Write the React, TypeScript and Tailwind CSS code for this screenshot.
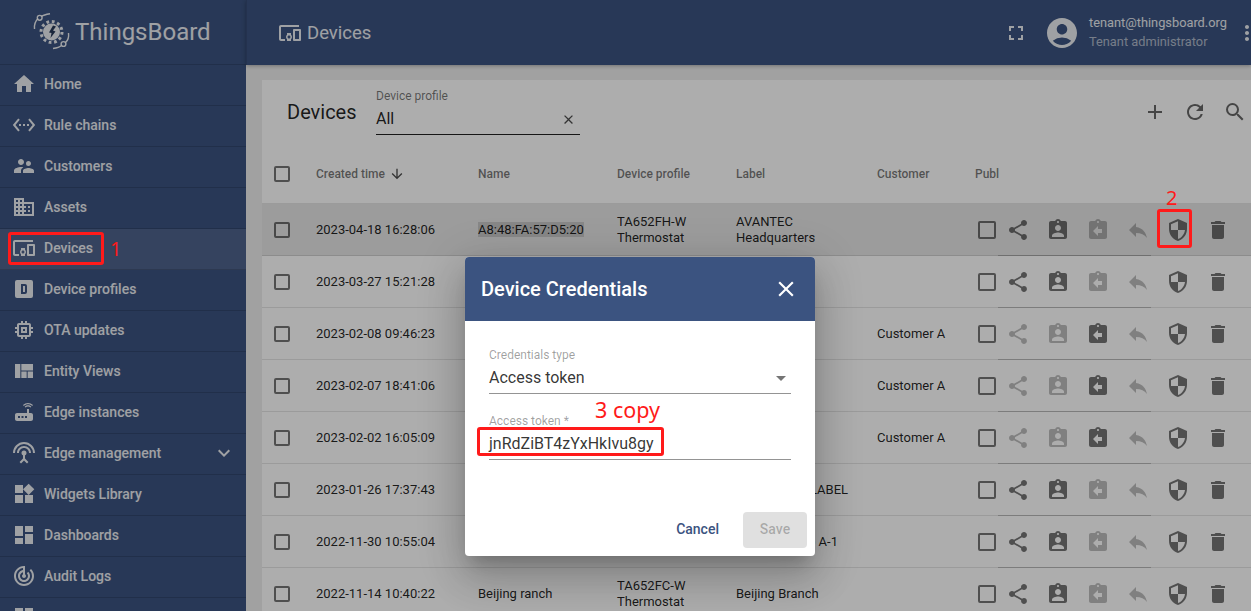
import React from "react";
import {
  MdHome, MdSettingsEthernet, MdSupervisorAccount, MdDomain, MdDevicesOther, MdMemory, MdViewQuilt, MdRouter,
  MdSettingsInputAntenna, MdWidgets, MdDashboard, MdTrackChanges, MdExpandMore, MdAdd, MdRefresh, MdSearch,
  MdFullscreen, MdAccountCircle, MdMoreVert, MdShare, MdAssignmentInd, MdAssignmentReturn, MdReply, MdSecurity,
  MdDelete, MdClose, MdArrowDownward, MdArrowDropDown,
} from "react-icons/md";

function ProfileIcon({ size = 24 }: { size?: number }) {
  return (
    <svg width={size} height={size} viewBox="0 0 24 24" fill="currentColor">
      <path d="M9,7V17H13A2,2 0 0,0 15,15V9A2,2 0 0,0 13,7H9M5,3H19A2,2 0 0,1 21,5V19A2,2 0 0,1 19,21H5A2,2 0 0,1 3,19V5A2,2 0 0,1 5,3M11,9H13V15H11V9Z" />
    </svg>
  );
}

function Logo() {
  return (
    <svg width="38" height="38" viewBox="0 0 38 38" fill="none">
      <circle cx="18.500" cy="19" r="8.500" fill="currentColor" />
      <circle cx="18.500" cy="19" r="10.500" stroke="currentColor" strokeWidth="3" strokeDasharray="2.750 2.750" />
      <path d="M20 12.500l3 1-3 4 2.500 1-5 6.500 1-5-2.500-.5z" fill="#273858" />
      <path d="M1.500 16C1 11.500 2.500 8 5 5.500" stroke="currentColor" strokeWidth="1.400" />
      <path d="M8.500 3.500C10.500 2 13 1.500 17 .8" stroke="currentColor" strokeWidth="1.400" />
      <circle cx="6.700" cy="4.800" r="2.400" stroke="currentColor" strokeWidth="1.400" />
      <path d="M35.500 20c.5 4-.5 7.500-3 9.500" stroke="currentColor" strokeWidth="1.400" />
      <path d="M28.500 32.500c-2 1.800-5 2.500-8.500 3" stroke="currentColor" strokeWidth="1.400" />
      <circle cx="30.500" cy="31" r="2.400" stroke="currentColor" strokeWidth="1.400" />
    </svg>
  );
}

const nav: { label: string; icon: React.ReactNode; active?: boolean; more?: boolean }[] = [
  { label: "Home", icon: <MdHome size={24} /> },
  { label: "Rule chains", icon: <MdSettingsEthernet size={24} /> },
  { label: "Customers", icon: <MdSupervisorAccount size={24} /> },
  { label: "Assets", icon: <MdDomain size={24} /> },
  { label: "Devices", icon: <MdDevicesOther size={24} />, active: true },
  { label: "Device profiles", icon: <ProfileIcon /> },
  { label: "OTA updates", icon: <MdMemory size={24} /> },
  { label: "Entity Views", icon: <MdViewQuilt size={24} /> },
  { label: "Edge instances", icon: <MdRouter size={24} /> },
  { label: "Edge management", icon: <MdSettingsInputAntenna size={24} />, more: true },
  { label: "Widgets Library", icon: <MdWidgets size={24} /> },
  { label: "Dashboards", icon: <MdDashboard size={24} /> },
  { label: "Audit Logs", icon: <MdTrackChanges size={24} /> },
  { label: "Api Usage", icon: <MdDashboard size={24} /> },
];

type Row = { time: string; name?: string; profile?: string[]; label?: string[]; customer?: string; assigned?: boolean; hover?: boolean };

const rows: Row[] = [
  { time: "2023-04-18 16:28:06", name: "A8:48:FA:57:D5:20", profile: ["TA652FH-W", "Thermostat"], label: ["AVANTEC", "Headquarters"], hover: true },
  { time: "2023-03-27 15:21:28" },
  { time: "2023-02-08 09:46:23", customer: "Customer A", assigned: true },
  { time: "2023-02-07 18:41:06", customer: "Customer A", assigned: true },
  { time: "2023-02-02 16:05:09", customer: "Customer A", assigned: true },
  { time: "2023-01-26 17:37:43", label: ["RED DEVICE LABEL"] },
  { time: "2022-11-30 10:55:04", label: ["Device_Group A-1"] },
  { time: "2022-11-14 10:40:22", name: "Beijing ranch", profile: ["TA652FC-W", "Thermostat"], label: ["Beijing Branch"] },
];

function Box({ className }: { className: string }) {
  return <div className={`border-2 border-black/54 rounded-[2px] ${className}`} />;
}

function Act({ on, children }: { on: boolean; children: React.ReactNode }) {
  return <div className={`w-10 flex justify-center ${on ? "text-black/54" : "text-black/26"}`}>{children}</div>;
}

export default function App() {
  return (
    <div className="relative w-[1251px] h-[611px] overflow-hidden flex font-[Roboto,sans-serif] bg-[#eeeeee]">
      <aside className="w-[246px] shrink-0 bg-[#3b5380] text-white/90 flex flex-col">
        <div className="h-[65px] shrink-0 border-b border-black/15 flex items-center pl-[33px] gap-[4px]">
          <Logo />
          <span className="text-[24px] text-white/90 leading-none">ThingsBoard</span>
        </div>
        {nav.map((n) => (
          <div key={n.label} className={`h-[41px] shrink-0 border-b border-black/15 flex items-center pl-3 pr-[3px] pb-[2px] gap-2 text-[14px] font-medium ${n.active ? "bg-white/10" : ""}`}>
            {n.icon}
            <span className="flex-1">{n.label}</span>
            {n.more && <MdExpandMore size={24} className="mr-[7px]" />}
          </div>
        ))}
      </aside>

      <div className="flex-1 min-w-0 flex flex-col">
        <header className="h-[65px] shrink-0 bg-[#3b5380] text-white/90 flex items-center pl-[31px] shadow-[0_1px_4px_rgba(0,0,0,.3)] border-l border-black/10">
          <MdDevicesOther size={24} />
          <span className="ml-[5px] text-[18.5px] pt-[2px]">Devices</span>
          <MdFullscreen size={24} className="ml-auto" />
          <MdAccountCircle size={36} className="ml-[16px]" />
          <div className="ml-[9px] w-[146px] leading-[18px]">
            <div className="text-[12.8px] -mt-[1px]">tenant@thingsboard.org</div>
            <div className="text-[12.8px] pt-[1px] text-white/60">Tenant administrator</div>
          </div>
          <MdMoreVert size={24} className="shrink-0 ml-[0px] -mr-[8px]" />
        </header>

        <main className="flex-1 min-h-0 pt-[15px] pl-4 overflow-hidden">
          <section className="bg-white h-[600px]">
            <div className="h-[64px] flex items-center pl-[25px]">
              <h1 className="text-[20px] text-black/87 w-[89px]">Devices</h1>
              <div className="w-[204px] border-b border-black/87 h-[46px]">
                <div className="text-[12px] text-black/54 leading-[14px]">Device profile</div>
                <div className="flex items-center justify-between h-[30px] pt-[2px] pr-[4px]">
                  <span className="text-[16px] text-black/87">All</span>
                  <MdClose size={15} className="text-black/70" />
                </div>
              </div>
              <div className="ml-auto flex text-black/60">
                <div className="w-10 flex justify-center"><MdAdd size={24} /></div>
                <div className="w-10 flex justify-center"><MdRefresh size={24} /></div>
                <div className="w-10 flex justify-center mr-[-4px]"><MdSearch size={24} /></div>
              </div>
            </div>

            <div className="h-[60px] flex items-center text-[12px] font-medium text-black/54 border-b border-black/10">
              <div className="w-[54px] pl-3 shrink-0"><Box className="w-4 h-4" /></div>
              <div className="w-[162px] shrink-0 flex items-center gap-[4px]">Created time <MdArrowDownward size={16} className="text-black/70" /></div>
              <div className="w-[139px] shrink-0">Name</div>
              <div className="w-[119px] shrink-0">Device profile</div>
              <div className="w-[141px] shrink-0">Label</div>
              <div className="w-[98px] shrink-0">Customer</div>
              <div>Publ</div>
            </div>

            {rows.map((r) => (
              <div key={r.time} className={`h-[52px] flex items-center text-[13px] leading-[16px] text-black/87 border-b border-black/10 ${r.hover ? "bg-[#e6e6e6]" : ""}`}>
                <div className="w-[54px] pl-3 shrink-0"><Box className="w-4 h-4" /></div>
                <div className="w-[162px] shrink-0">{r.time}</div>
                <div className="w-[139px] shrink-0">
                  {r.name && <span className={r.hover ? "bg-[#c8c8c8]" : ""}>{r.name}</span>}
                </div>
                <div className="w-[119px] shrink-0">{r.profile?.map((p) => <div key={p}>{p}</div>)}</div>
                <div className="w-[141px] shrink-0 whitespace-nowrap">{r.label?.map((p) => <div key={p}>{p}</div>)}</div>
                <div className="w-[98px] shrink-0">{r.customer}</div>
                <div className="w-[3px] shrink-0" />
                <Box className="w-[18px] h-[18px] shrink-0" />
                <div className="relative ml-[2px] flex h-full items-center">
                  <Act on={!r.assigned}><MdShare size={24} /></Act>
                  <Act on={!r.assigned}><MdAssignmentInd size={24} /></Act>
                  <Act on={!!r.assigned}><MdAssignmentReturn size={24} /></Act>
                  <Act on={false}><MdReply size={24} /></Act>
                  <Act on><MdSecurity size={24} /></Act>
                  <Act on><MdDelete size={24} /></Act>
                  <div className="absolute left-0 bottom-[-1px] w-[153px] border-b border-black/20" />
                </div>
              </div>
            ))}
          </section>
        </main>
      </div>

      <div className="absolute inset-0 bg-black/32" />

      <div className="absolute left-[465px] top-[257px] w-[350px] h-[299px] bg-white rounded-[4px] overflow-hidden flex flex-col shadow-[0_11px_15px_-7px_rgba(0,0,0,.2),0_24px_38px_3px_rgba(0,0,0,.14),0_9px_46px_8px_rgba(0,0,0,.12)]">
        <div className="h-16 shrink-0 bg-[#3b5380] text-white flex items-center pl-4 pr-[16px] justify-between">
          <h2 className="text-[20px] font-medium">Device Credentials</h2>
          <MdClose size={26} />
        </div>
        <div className="flex-1 px-6 pt-[27px]">
          <div className="text-[12px] leading-[14px] text-black/38">Credentials type</div>
          <div className="h-[31px] border-b border-black/42 flex items-center justify-between text-[16px] text-black/80 mt-[1px]">
            <span>Access token</span>
            <MdArrowDropDown size={24} className="text-black/54 -mr-[2px]" />
          </div>
          <div className="mt-[20px] text-[12px] leading-[14px] text-black/38">Access token *</div>
          <div className="h-[31px] border-b border-black/42 flex items-center text-[16px] text-black/80 mt-[1px]">jnRdZiBT4zYxHkIvu8gy</div>
        </div>
        <div className="flex justify-end items-center pr-2 pb-2 gap-[8px]">
          <button className="h-9 px-4 pb-[2px] text-[14px] font-medium text-[#3b5380]">Cancel</button>
          <button className="h-9 w-16 pb-[2px] rounded-[4px] bg-[#e0e0e0] text-[14px] font-medium text-black/26">Save</button>
        </div>
      </div>

      <div className="absolute left-[8px] top-[232px] w-[96px] h-[33px] border-[3px] border-[#ff1a1a] rounded-[3px]" />
      <span className="absolute left-[110px] top-[235px] text-[20px] leading-[28px] text-[#ff1a1a] font-['Noto_Sans',sans-serif]">1</span>
      <div className="absolute left-[1157px] top-[209px] w-[35px] h-[39px] border-[3px] border-[#ff1a1a] rounded-[3px]" />
      <span className="absolute left-[1166px] top-[184px] text-[20px] leading-[28px] text-[#ff1a1a] font-['Noto_Sans',sans-serif]">2</span>
      <div className="absolute left-[477px] top-[427px] w-[187px] h-[29px] border-[3px] border-[#ff1a1a] rounded-[3px]" />
      <span className="absolute left-[595px] top-[396px] text-[21.500px] leading-[28px] text-[#ff1a1a] font-['Noto_Sans',sans-serif]">3 copy</span>
    </div>
  );
}
